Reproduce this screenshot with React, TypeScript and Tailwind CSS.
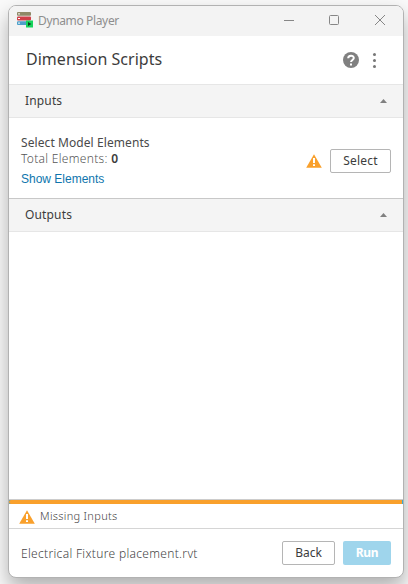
import React from "react";

function WarningIcon({ className = "" }: { className?: string }) {
  return (
    <svg width="16" height="14" viewBox="0 0 16 14" className={className}>
      <path d="M8 .2 15.8 13.8H.2Z" fill="#f9a02c" />
      <path d="M7 4h2v5H7zM7 10.2h2v1.8H7z" fill="#fff" />
    </svg>
  );
}

function AppIcon() {
  return (
    <svg width="17" height="16" viewBox="0 0 17 16" className="mb-[2px] ml-2 shrink-0">
      <rect x="0" y="0" width="14" height="3.8" rx="1" fill="#8f8967" />
      <rect x="0" y="4.6" width="14" height="3.8" rx="1" fill="#cf3f48" />
      <rect x="0" y="9.2" width="14" height="3.8" rx="1" fill="#4d9fc9" />
      <path d="M1 1.9h2M1 6.5h2M1 11.1h2" stroke="#fff" strokeWidth="1" />
      <rect x="9" y="8.5" width="7" height="7" fill="#16d45c" />
      <path d="M11 10v4l3.4-2Z" fill="#0b3d1c" />
    </svg>
  );
}

function SectionHeader({ title, className }: { title: string; className: string }) {
  return (
    <div className={`flex h-[34px] shrink-0 items-center justify-between border-y border-b-[#e6e6e6] bg-[#f4f4f4] pl-4 pr-4 ${className}`}>
      <span className="text-[12px] leading-4 tracking-[0.15px] text-[#3c3c3c]">{title}</span>
      <svg width="7" height="4" viewBox="0 0 7 4"><path d="M3.5 0 7 4H0Z" fill="#808080" /></svg>
    </div>
  );
}

export default function App() {
  return (
    <div className="h-[584px] w-[408px] overflow-hidden bg-[#fafafa] pl-2 pt-[5px] font-['Noto_Sans',sans-serif]">
      <div className="flex h-[573px] w-[396px] flex-col overflow-hidden rounded-lg border border-[#b2b2b2] bg-white shadow-[0_10px_20px_rgba(0,0,0,0.3)]">
        <div className="flex h-[30px] shrink-0 items-center bg-[#f3f3f3]">
          <AppIcon />
          <span className="ml-[4px] text-[12px] leading-4 tracking-[-0.36px] text-[#8e8e8e]">Dynamo Player</span>
          <svg width="102" height="12" viewBox="0 0 102 12" className="mb-[2px] ml-auto mr-[17px]" fill="none" stroke="#868686">
            <path d="M0 6.5h10" />
            <rect x="45.5" y="1.5" width="9" height="9" rx="1" />
            <path d="m91 1 10 10M101 1 91 11" />
          </svg>
        </div>
        <div className="flex h-12 shrink-0 items-center pl-[17px]">
          <h1 className="pb-[2px] text-[16px] leading-6 tracking-[0.03px] text-[#3c3c3c]">Dimension Scripts</h1>
          <svg width="16" height="16" viewBox="0 0 16 16" className="ml-auto">
            <circle cx="8" cy="8" r="8" fill="#808080" />
            <path d="M5.2 6.2C5.2 2.8 10.8 2.8 10.8 6.1 10.8 7.8 8 8.1 8 10" fill="none" stroke="#fff" strokeWidth="2" />
            <path d="M7 11.4h2v2H7z" fill="#fff" />
          </svg>
          <svg width="4" height="16" viewBox="0 0 4 16" className="ml-[13px] mr-[27px]" fill="#777">
            <circle cx="2.5" cy="2.5" r="1.5" /><circle cx="2.5" cy="8.5" r="1.5" /><circle cx="2.5" cy="14.5" r="1.5" />
          </svg>
        </div>
        <SectionHeader title="Inputs" className="border-t-[#e6e6e6]" />
        <div className="flex h-20 shrink-0 items-center pl-3 pr-3 text-[12px] leading-4 text-[#4a4a4a]">
          <div className="flex flex-col pt-[5px]">
            <span className="tracking-[0.08px]">Select Model Elements</span>
            <span className="font-light tracking-[0.3px] text-[#555]">Total Elements: <b className="font-semibold text-[#3c3c3c]">0</b></span>
            <a className="mt-1 font-['Liberation_Sans',Arial,sans-serif] text-[12px] text-[#0e75ad]">Show Elements</a>
          </div>
          <WarningIcon className="ml-auto mr-2 mt-[6px]" />
          <button className="mt-[5px] h-6 w-[61px] rounded-[2px] border border-[#b5b5b5] text-[12px] tracking-[0.2px] text-[#3c3c3c]">Select</button>
        </div>
        <SectionHeader title="Outputs" className="border-t-[#c8c8c8]" />
        <div className="flex-1" />
        <div className="h-[5px] shrink-0 border-t border-[#ccc] bg-[#3aabd2]">
          <div className="h-1 w-[393px] rounded-l-[2px] bg-[#f9a02c]" />
        </div>
        <div className="flex h-[25px] shrink-0 items-center border-b border-[#d5d5d5] pl-[10px]">
          <WarningIcon className="mt-px" />
          <span className="ml-[5px] text-[11px] font-light leading-4 tracking-[0.32px] text-[#444]">Missing Inputs</span>
        </div>
        <div className="flex h-12 shrink-0 items-center pl-3 pr-3">
          <span className="pt-[2px] text-[12px] font-light leading-4 tracking-[0.32px] text-[#444]">Electrical Fixture placement.rvt</span>
          <button className="ml-auto h-6 w-[53px] rounded-[2px] border border-[#b5b5b5] text-[12px] leading-4 text-[#3c3c3c]">Back</button>
          <button className="ml-2 h-6 w-12 rounded-[2px] bg-[#9fd5ec] text-[12px] font-bold leading-4 tracking-[-0.3px] text-white">Run</button>
        </div>
      </div>
    </div>
  );
}
